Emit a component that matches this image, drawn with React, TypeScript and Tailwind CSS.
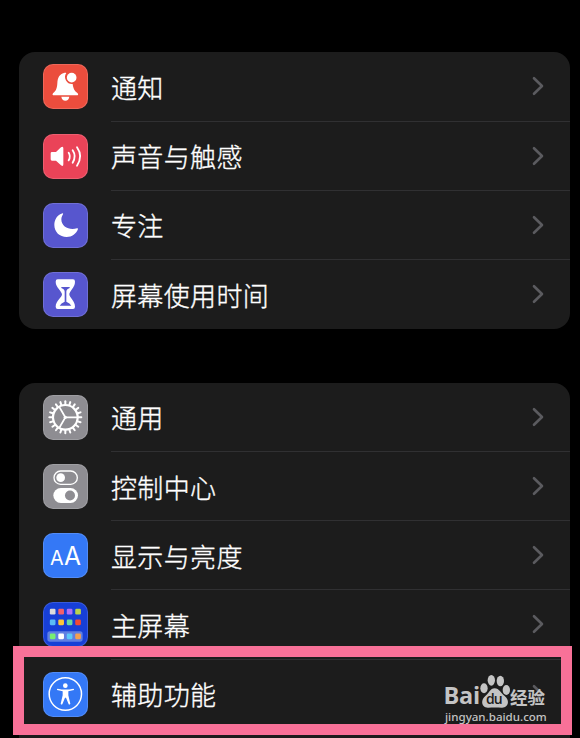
import type { ReactNode } from 'react';

type Item = { label: string; tile: string; icon: ReactNode };

const Glyph = ({ children }: { children: ReactNode }) => (
  <svg viewBox="0 0 135 135" className="block size-full" fill="white">
    {children}
  </svg>
);

const Bell = (
  <Glyph>
    <path d="M63 27C66 26 68 26 70 27A21 21 0 0 0 89 60C91 74 94 80 104 88Q108 94 101 94H33Q26 94 30 88C40 80 42 72 43 58C44 40 50 30 63 27Z" />
    <circle cx="86" cy="41" r="14.5" />
    <path d="M55 98H79Q77 110 67 110Q57 110 55 98Z" />
  </Glyph>
);

const Speaker = (
  <Glyph>
    <path d="M27 54H39L54 40Q61 35 61 43V91Q61 99 54 94L39 80H27Q23 80 23 76V58Q23 54 27 54Z" />
    <g fill="none" stroke="white" strokeWidth="5.500" strokeLinecap="round">
      <path d="M77 56Q84 67 77 79" />
      <path d="M89 49Q101 67 89 86" />
      <path d="M102 40Q121 67 102 95" />
    </g>
  </Glyph>
);

const Moon = (
  <Glyph>
    <path d="M59 31C42 36 34 51 34 66C34 87 50 102 71 102C87 102 100 92 105 78Q105 75 102 76C80 83 55 72 55 49C55 43 58 38 60 34Q61 30 59 31Z" />
  </Glyph>
);

const Hourglass = (
  <Glyph>
    <path d="M44 22H90Q96 22 96 29C96 47 79 57 79 67C79 77 96 87 96 104Q96 111 90 111H44Q38 111 38 104C38 87 57 77 57 67C57 57 38 47 38 29Q38 22 44 22Z" />
    <path d="M55 45H80V48Q70 52 70 59V89Q81 93 85 101H50Q54 93 65 89V59Q65 52 55 48Z" fill="#5756ce" />
  </Glyph>
);

const teeth = Array.from({ length: 20 }, (_, i) => i * 18);

const Gear = (
  <Glyph>
    <g fill="none" stroke="white">
      <circle cx="67" cy="67" r="37" strokeWidth="6.500" />
      <g strokeWidth="6" strokeLinecap="round">
        {teeth.map((a) => (
          <path key={a} d="M106 67H115" transform={`rotate(${a} 67 67)`} />
        ))}
      </g>
      <g strokeWidth="5.500">
        <path d="M67 67H104M67 67L48 34M67 67L48 100" />
      </g>
    </g>
    <circle cx="67" cy="67" r="5" />
  </Glyph>
);

const Toggles = (
  <Glyph>
    <rect x="33" y="21" width="70" height="40" rx="20" fill="none" stroke="white" strokeWidth="4" />
    <circle cx="53" cy="41" r="13" />
    <rect x="31" y="72" width="74" height="45" rx="22.5" />
    <circle cx="81" cy="94.500" r="15" fill="#8e8d92" />
  </Glyph>
);

const Letters = (
  <Glyph>
    <g fontFamily="Inter, sans-serif">
      <text x="21" y="96" fontSize="60" textLength="41" lengthAdjust="spacingAndGlyphs">A</text>
      <text x="63" y="96" fontSize="77" textLength="51" lengthAdjust="spacingAndGlyphs">A</text>
    </g>
  </Glyph>
);

const apps = [
  ['#dcdcdc', '#f4606a', '#ae70f8', '#b9d34c'],
  ['#5bbcf5', '#fcc63a', '#68d9a3', '#f24a35'],
  ['#78ef72', '#ffffff', '#5bc8f8', '#f4a050'],
];
const appRows = [29, 61, 103];

const Home = (
  <Glyph>
    <rect x="13" y="88" width="106" height="31" rx="8" fill="#5f7fe2" />
    {apps.map((row, r) =>
      row.map((c, i) => (
        <rect key={`${r}-${i}`} x={20.5 + i * 25.4} y={appRows[r] - 8.5} width="17" height="17" rx="3.500" fill={c} />
      )),
    )}
  </Glyph>
);

const Accessibility = (
  <Glyph>
    <circle cx="67" cy="66" r="48.500" fill="none" stroke="white" strokeWidth="4.500" />
    <circle cx="67" cy="41" r="7" />
    <path d="M44 50Q67 55 91 50Q94 51 93 54L76 58V70L82 95Q80 99 77 97L69 77H66L58 97Q54 99 53 95L59 70V58L42 54Q41 51 44 50Z" />
  </Glyph>
);

const first: Item[] = [
  { label: '通知', tile: 'bg-[#eb4d3d]', icon: Bell },
  { label: '声音与触感', tile: 'bg-[#ea4358]', icon: Speaker },
  { label: '专注', tile: 'bg-[#5756ce]', icon: Moon },
  { label: '屏幕使用时间', tile: 'bg-[#5756ce]', icon: Hourglass },
];

const second: Item[] = [
  { label: '通用', tile: 'bg-[#8e8d92]', icon: Gear },
  { label: '控制中心', tile: 'bg-[#8e8d92]', icon: Toggles },
  { label: '显示与亮度', tile: 'bg-[#3478f6]', icon: Letters },
  { label: '主屏幕', tile: 'bg-[#173fd6]', icon: Home },
  { label: '辅助功能', tile: 'bg-[#3478f6]', icon: Accessibility },
];

function Row({ item, last }: { item: Item; last: boolean }) {
  return (
    <div className="flex h-[69.2px] items-center pl-[24.4px]">
      <div className={`size-[45px] shrink-0 overflow-hidden rounded-[10px] ring-1 ring-inset ring-white/15 ${item.tile}`}>
        {item.icon}
      </div>
      <div
        className={`ml-[22.6px] flex h-full flex-1 items-center justify-between border-b pr-[26px] ${
          last ? 'border-transparent' : 'border-[#303032]'
        }`}
      >
        <span className="mt-px text-[26px] leading-none font-light tracking-[0.35px] text-white [-webkit-text-stroke:0.35px_white]">{item.label}</span>
        <svg viewBox="0 0 12 20" className="h-5 w-3" fill="none" stroke="#5b5b5f" strokeWidth="2.600" strokeLinecap="round" strokeLinejoin="round">
          <path d="M2 2.200L10 10L2 17.800" />
        </svg>
      </div>
    </div>
  );
}

function Card({ items, open }: { items: Item[]; open?: boolean }) {
  return (
    <section className={`ml-[19px] w-[550.5px] bg-[#1c1c1c] ${open ? 'h-[400px] rounded-t-[16px]' : 'rounded-[16px]'}`}>
      {items.map((item, i) => (
        <Row key={item.label} item={item} last={!open && i === items.length - 1} />
      ))}
    </section>
  );
}

function Watermark() {
  return (
    <div className="absolute top-[675px] left-[443.5px] w-[106px] text-[#c4c4c4]">
      <div className="flex h-[34px] items-end">
        <span className="mb-[3px] w-[36.5px] font-['Open_Sans'] text-[23.5px] leading-[22px] font-bold tracking-[-0.3px]">Bai</span>
        <svg viewBox="0 0 90 102" className="h-[34px] w-[30px] shrink-0" fill="#c4c4c4">
          <ellipse cx="12" cy="40" rx="11" ry="15" />
          <ellipse cx="34" cy="16" rx="11" ry="16" />
          <ellipse cx="61" cy="18" rx="11" ry="16" />
          <ellipse cx="79" cy="45" rx="11" ry="15" />
          <path d="M44 40C58 40 62 54 74 63C92 77 83 99 65 98C53 97 36 97 25 98C5 99 0 77 16 63C28 54 30 40 44 40Z" />
          <text x="18" y="88" fontFamily="Open Sans, sans-serif" fontWeight="600" fontSize="42" fill="#1c1c1c" textLength="50">du</text>
        </svg>
        <span className="mb-px text-[17.5px] leading-[22px] font-bold">经验</span>
      </div>
      <div className="ml-[1.5px] font-['Noto_Sans'] text-[11.55px] leading-[15px] font-medium whitespace-nowrap">jingyan.baidu.com</div>
    </div>
  );
}

export default function App() {
  return (
    <main className="relative h-[738px] w-[580px] overflow-hidden bg-black pt-[52.4px] font-['Noto_Sans_CJK_SC',sans-serif]">
      <div className="flex flex-col gap-[53.7px]">
        <Card items={first} />
        <Card items={second} open />
      </div>
      <div className="absolute top-[646px] left-[13px] h-[89px] w-[559px] border-[11px] border-[#f87198]" />
      <Watermark />
    </main>
  );
}
